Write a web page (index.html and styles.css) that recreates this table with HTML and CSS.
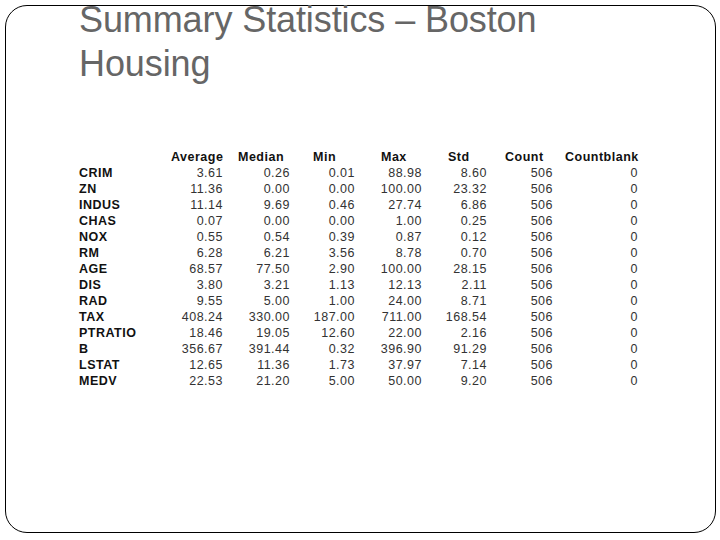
FILE: index.html
```html
<!DOCTYPE html>
<html>
<head>
<meta charset="utf-8">
<link rel="stylesheet" href="styles.css">
</head>
<body>
<div class="slide">
  <h1 class="title">Summary Statistics – Boston<br>Housing</h1>
  <div class="table">
    <div class="head">
      <span></span><span>Average</span><span>Median</span><span>Min</span><span>Max</span><span>Std</span><span>Count</span><span>Countblank</span>
    </div>
    <div class="rows">
      <span class="lbl">CRIM</span><span>3.61</span><span>0.26</span><span>0.01</span><span>88.98</span><span>8.60</span><span>506</span><span>0</span>
      <span class="lbl">ZN</span><span>11.36</span><span>0.00</span><span>0.00</span><span>100.00</span><span>23.32</span><span>506</span><span>0</span>
      <span class="lbl">INDUS</span><span>11.14</span><span>9.69</span><span>0.46</span><span>27.74</span><span>6.86</span><span>506</span><span>0</span>
      <span class="lbl">CHAS</span><span>0.07</span><span>0.00</span><span>0.00</span><span>1.00</span><span>0.25</span><span>506</span><span>0</span>
      <span class="lbl">NOX</span><span>0.55</span><span>0.54</span><span>0.39</span><span>0.87</span><span>0.12</span><span>506</span><span>0</span>
      <span class="lbl">RM</span><span>6.28</span><span>6.21</span><span>3.56</span><span>8.78</span><span>0.70</span><span>506</span><span>0</span>
      <span class="lbl">AGE</span><span>68.57</span><span>77.50</span><span>2.90</span><span>100.00</span><span>28.15</span><span>506</span><span>0</span>
      <span class="lbl">DIS</span><span>3.80</span><span>3.21</span><span>1.13</span><span>12.13</span><span>2.11</span><span>506</span><span>0</span>
      <span class="lbl">RAD</span><span>9.55</span><span>5.00</span><span>1.00</span><span>24.00</span><span>8.71</span><span>506</span><span>0</span>
      <span class="lbl">TAX</span><span>408.24</span><span>330.00</span><span>187.00</span><span>711.00</span><span>168.54</span><span>506</span><span>0</span>
      <span class="lbl">PTRATIO</span><span>18.46</span><span>19.05</span><span>12.60</span><span>22.00</span><span>2.16</span><span>506</span><span>0</span>
      <span class="lbl">B</span><span>356.67</span><span>391.44</span><span>0.32</span><span>396.90</span><span>91.29</span><span>506</span><span>0</span>
      <span class="lbl">LSTAT</span><span>12.65</span><span>11.36</span><span>1.73</span><span>37.97</span><span>7.14</span><span>506</span><span>0</span>
      <span class="lbl">MEDV</span><span>22.53</span><span>21.20</span><span>5.00</span><span>50.00</span><span>9.20</span><span>506</span><span>0</span>
    </div>
  </div>
</div>
</body>
</html>
```

FILE: styles.css
```css
html, body {
  margin: 0;
  padding: 0;
  background: #fff;
}
body {
  width: 720px;
  height: 540px;
  overflow: hidden;
  font-family: "Liberation Sans", Arial, sans-serif;
}
.slide {
  box-sizing: border-box;
  margin: 5px 0 0 5px;
  width: 711px;
  height: 528px;
  border: 1.5px solid #000;
  border-radius: 22px;
  padding-left: 73px;
}
.title {
  margin: -8px 0 0 0;
  font-family: "Liberation Sans", Arial, sans-serif;
  font-weight: normal;
  font-size: 36px;
  line-height: 44px;
  color: #666;
  letter-spacing: -0.1px;
}
.table {
  margin-top: 63px;
  font-size: 12.5px;
  line-height: 16px;
  letter-spacing: 0.5px;
}
.head {
  display: grid;
  grid-template-columns: 92px 67px 75px 68px 67px 57px 60px auto;
  font-weight: bold;
  color: #111;
}
.rows {
  display: grid;
  grid-template-columns: 100px 44px 67px 65px 67px 65px 66px 85px;
  color: #333;
}
.rows span {
  text-align: right;
}
.rows .lbl {
  text-align: left;
  font-weight: bold;
  color: #111;
}
```
